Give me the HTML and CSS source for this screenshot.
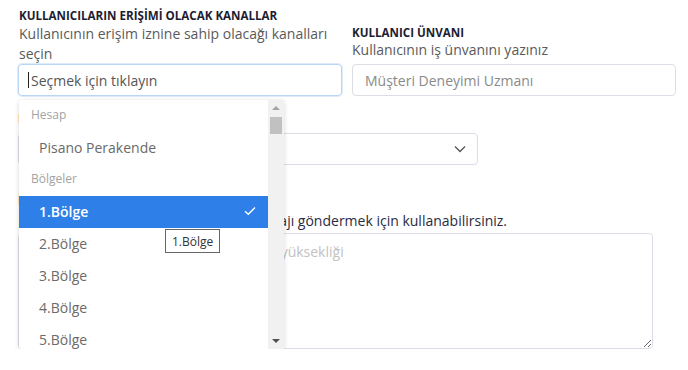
FILE: index.html
```html
<!DOCTYPE html>
<html lang="tr">
<head>
<meta charset="utf-8">
<title>Kullanıcı</title>
<link rel="stylesheet" href="styles.css">
</head>
<body>
<div class="page">
  <div class="top-row">
    <div class="field channels">
      <div class="label">KULLANICILARIN ERİŞİMİ OLACAK KANALLAR</div>
      <div class="hint">Kullanıcının erişim iznine sahip olacağı kanalları seçin</div>
      <div class="input focused"><span class="caret"></span>Seçmek için tıklayın</div>
      <div class="dropdown">
        <div class="options">
          <div class="group">Hesap</div>
          <div class="option">Pisano Perakende</div>
          <div class="group">Bölgeler</div>
          <div class="option selected">1.Bölge
            <svg class="check" width="12" height="10" viewBox="0 0 12 10"><path d="M1 5.2 L4.3 8.3 L11 1.5" fill="none" stroke="#fff" stroke-width="1.4"/></svg>
          </div>
          <div class="option">2.Bölge</div>
          <div class="option">3.Bölge</div>
          <div class="option">4.Bölge</div>
          <div class="option">5.Bölge</div>
        </div>
        <div class="scrollbar">
          <span class="arrow up"></span>
          <span class="thumb"></span>
          <span class="spacer"></span>
          <span class="arrow down"></span>
        </div>
        <div class="tooltip">1.Bölge</div>
      </div>
    </div>
    <div class="field">
      <div class="label">KULLANICI ÜNVANI</div>
      <div class="hint hint-right">Kullanıcının iş ünvanını yazınız</div>
      <div class="input placeholder">Müşteri Deneyimi Uzmanı</div>
    </div>
  </div>

  <div class="field lang">
    <div class="label">DİL</div>
    <div class="select">
      <span>Türkçe</span>
      <svg class="chev" width="12" height="8" viewBox="0 0 12 8"><path d="M1 1.5 L6 6.5 L11 1.5" fill="none" stroke="#555" stroke-width="1.3"/></svg>
    </div>
  </div>

  <div class="field message">
    <div class="label">İMZA</div>
    <div class="hint dark">Bu alanı, bütün müşterilerinize özel mesajı göndermek için kullanabilirsiniz.</div>
    <textarea class="textarea" placeholder="Mesajınızı buraya yazın, metin kutusu yüksekliği"></textarea>
  </div>
</div>
</body>
</html>
```
FILE: styles.css
```css
* { box-sizing: border-box; }
body {
  margin: 0;
  background: #fff;
  font-family: "Open Sans", "Noto Sans", sans-serif;
  color: #333;
}
.page {
  padding: 8px 13px 0 18px;
}
.top-row {
  display: grid;
  grid-template-columns: 324px 324px;
  column-gap: 10px;
  align-items: end;
}
.field { position: relative; }
.label {
  font-size: 11.6px;
  font-weight: 700;
  color: #1d1d32;
  line-height: 15px;
}
.hint {
  font-size: 14px;
  color: #5a5a5a;
  line-height: 20px;
}
.hint-right { margin-bottom: 4px; }
.channels .label { margin-bottom: 1px; margin-left: 1px; }
.channels .hint { margin-left: 1px; }
.input {
  height: 32px;
  border: 1px solid #dcdde6;
  border-radius: 4px;
  padding: 0 12px;
  display: flex;
  align-items: center;
  font-size: 14px;
  color: #555;
}
.input.focused {
  border-color: #b9d6f6;
  box-shadow: 0 0 0 1px #deebfb;
  padding-left: 9px;
}
.caret {
  width: 1px;
  height: 16px;
  background: #222;
  margin-right: 2px;
}
.input.placeholder { color: #8a8a8a; }

.dropdown {
  position: absolute;
  left: 1px;
  top: calc(100% + 4px);
  width: 265px;
  height: 249px;
  background: #fff;
  border-radius: 3px;
  box-shadow: 0 1px 5px rgba(0, 0, 0, 0.16);
  display: flex;
  z-index: 5;
}
.options {
  flex: 1;
  overflow: hidden;
}
.group {
  height: 32px;
  display: flex;
  align-items: center;
  padding-left: 12px;
  padding-bottom: 3px;
  font-size: 12px;
  color: #a3a3a3;
}
.option {
  height: 32px;
  display: flex;
  align-items: center;
  padding-left: 20px;
  padding-right: 12px;
  padding-bottom: 2px;
  font-size: 14px;
  color: #6a6a6a;
}
.option.selected {
  background: #2e80e8;
  color: #fff;
  font-weight: 600;
  justify-content: space-between;
}
.scrollbar {
  width: 16px;
  background: #f1f1f1;
  display: flex;
  flex-direction: column;
  align-items: center;
  padding: 6px 0 6px;
}
.arrow {
  width: 0;
  height: 0;
  border-left: 4px solid transparent;
  border-right: 4px solid transparent;
}
.arrow.up { border-bottom: 4px solid #a3a3a3; }
.arrow.down { border-top: 4px solid #505050; }
.thumb {
  width: 12px;
  height: 17px;
  background: #c1c1c1;
  margin-top: 7px;
}
.spacer { flex: 1; }
.tooltip {
  position: absolute;
  left: 146px;
  top: 129px;
  height: 24px;
  padding: 0 6px;
  border: 1px solid #666;
  background: #fff;
  font-size: 12px;
  color: #333;
  display: flex;
  align-items: center;
}

.lang { margin-top: 15px; width: 460px; }
.lang .label { margin-bottom: 7px; }
.select {
  height: 32px;
  border: 1px solid #dcdde6;
  border-radius: 4px;
  display: flex;
  align-items: center;
  justify-content: space-between;
  padding: 0 11px 0 12px;
  font-size: 14px;
  color: #555;
}
.message { margin-top: 28px; width: 636px; }
.hint.dark { color: #2b2b40; margin-top: 3px; margin-bottom: 2px; }
.textarea {
  display: block;
  width: 635px;
  height: 116px;
  border: 1px solid #dcdde6;
  border-radius: 4px;
  padding: 8px 12px 8px 14px;
  font-family: inherit;
  font-size: 14px;
  resize: vertical;
}
.textarea::placeholder { color: #c2c2c2; }
```
